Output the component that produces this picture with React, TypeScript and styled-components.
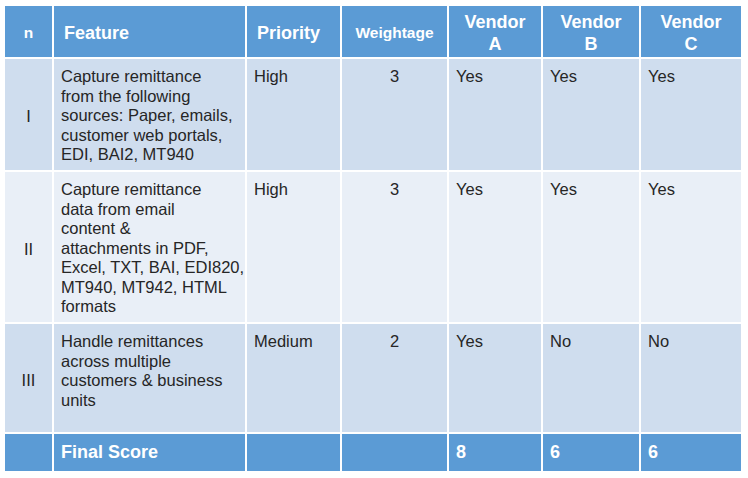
import styled, { createGlobalStyle } from "styled-components";

const GlobalStyle = createGlobalStyle`
    html, body {
        margin: 0;
        padding: 0;
        background: #ffffff;
    }
    body {
        font-family: "Liberation Sans", Arial, sans-serif;
        color: #262626;
    }
`;

const Wrapper = styled.div`
    width: 748px;
    height: 478px;
    padding: 4px 0 0 3px;
    box-sizing: border-box;
    overflow: hidden;
`;

const Table = styled.table`
    width: 740px;
    border-collapse: separate;
    border-spacing: 2px;
    table-layout: fixed;
`;

const HeadCell = styled.th<{ width: number; small?: boolean; center?: boolean }>`
    width: ${({ width }) => width}px;
    height: 51px;
    padding: 3px ${({ center }) => (center ? 0 : 10)}px 0;
    box-sizing: border-box;
    background-color: #5b9bd5;
    color: #ffffff;
    font-weight: bold;
    font-size: ${({ small }) => (small ? 15.5 : 18)}px;
    line-height: 22px;
    text-align: ${({ center }) => (center ? "center" : "left")};
    vertical-align: middle;
`;

const Row = styled.tr<{ alt: boolean; height: number }>`
    height: ${({ height }) => height}px;
    td {
        background-color: ${({ alt }) => (alt ? "#e9eff7" : "#cfddee")};
    }
`;

const Cell = styled.td<{ align?: string; middle?: boolean }>`
    padding: 8px 2px 3px 7px;
    font-size: 16.5px;
    line-height: 19.5px;
    text-align: ${({ align }) => align || "left"};
    vertical-align: ${({ middle }) => (middle ? "middle" : "top")};
    ${({ align }) => (align === "center" ? "padding-left: 2px;" : "")}
`;

const Line = styled.span`
    display: block;
    white-space: nowrap;
`;

const FooterRow = styled.tr`
    height: 37px;
    td {
        background-color: #5b9bd5;
        color: #ffffff;
        font-weight: bold;
        font-size: 18px;
        padding: 0 7px;
        vertical-align: middle;
    }
`;

interface IRow {
    n: string;
    feature: string[];
    priority: string;
    weight: number;
    vendors: string[];
    height: number;
}

const rows: IRow[] = [
    {
        n: "I",
        feature: [
            "Capture remittance",
            "from the following",
            "sources: Paper, emails,",
            "customer web portals,",
            "EDI, BAI2, MT940",
        ],
        priority: "High",
        weight: 3,
        vendors: ["Yes", "Yes", "Yes"],
        height: 111,
    },
    {
        n: "II",
        feature: [
            "Capture remittance",
            "data from email",
            "content &",
            "attachments in PDF,",
            "Excel, TXT, BAI, EDI820,",
            "MT940, MT942, HTML",
            "formats",
        ],
        priority: "High",
        weight: 3,
        vendors: ["Yes", "Yes", "Yes"],
        height: 150,
    },
    {
        n: "III",
        feature: [
            "Handle remittances",
            "across multiple",
            "customers & business",
            "units",
        ],
        priority: "Medium",
        weight: 2,
        vendors: ["Yes", "No", "No"],
        height: 108,
    },
];

function App() {
    return (
        <Wrapper>
            <GlobalStyle />
            <Table>
                <thead>
                    <tr>
                        <HeadCell width={47} small center>n</HeadCell>
                        <HeadCell width={191}>Feature</HeadCell>
                        <HeadCell width={93}>Priority</HeadCell>
                        <HeadCell width={105} small center>Weightage</HeadCell>
                        <HeadCell width={92} center>Vendor<br />A</HeadCell>
                        <HeadCell width={96} center>Vendor<br />B</HeadCell>
                        <HeadCell width={100} center>Vendor<br />C</HeadCell>
                    </tr>
                </thead>
                <tbody>
                    {rows.map((row, i) => (
                        <Row key={row.n} alt={i % 2 === 1} height={row.height}>
                            <Cell align="center" middle>{row.n}</Cell>
                            <Cell>
                                {row.feature.map((line) => (
                                    <Line key={line}>{line}</Line>
                                ))}
                            </Cell>
                            <Cell>{row.priority}</Cell>
                            <Cell align="center">{row.weight}</Cell>
                            {row.vendors.map((v, j) => (
                                <Cell key={j}>{v}</Cell>
                            ))}
                        </Row>
                    ))}
                    <FooterRow>
                        <td></td>
                        <td>Final Score</td>
                        <td></td>
                        <td></td>
                        <td>8</td>
                        <td>6</td>
                        <td>6</td>
                    </FooterRow>
                </tbody>
            </Table>
        </Wrapper>
    );
}

export default App;
